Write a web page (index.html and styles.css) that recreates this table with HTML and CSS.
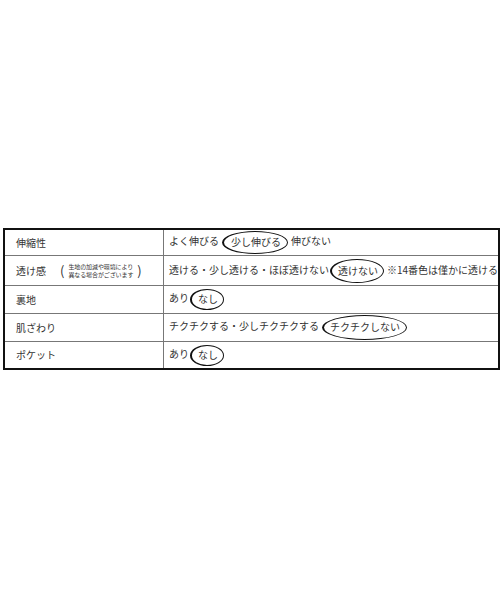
FILE: index.html
```html
<!DOCTYPE html>
<html lang="ja">
<head>
<meta charset="utf-8">
<link rel="stylesheet" href="styles.css">
</head>
<body>
<div class="page">
  <table class="spec">
    <tr class="r1">
      <th>伸縮性</th>
      <td>よく伸びる<span class="oval o1">少し伸びる</span>伸びない</td>
    </tr>
    <tr class="r2">
      <th><span class="lbl">透け感</span><span class="paren">(</span><span class="note">生地の加減や環境により<br>異なる場合がございます</span><span class="paren">)</span></th>
      <td>透ける・少し透ける・ほぼ透けない<span class="oval o2">透けない</span>※14番色は僅かに透ける</td>
    </tr>
    <tr class="r3">
      <th>裏地</th>
      <td>あり<span class="oval o3">なし</span></td>
    </tr>
    <tr class="r4">
      <th>肌ざわり</th>
      <td>チクチクする・少しチクチクする<span class="oval o4">チクチクしない</span></td>
    </tr>
    <tr class="r5">
      <th>ポケット</th>
      <td>あり<span class="oval o3">なし</span></td>
    </tr>
  </table>
</div>
</body>
</html>
```
FILE: styles.css
```css
html, body {
  margin: 0;
  padding: 0;
  background: #fff;
}
.page {
  padding: 228px 0 0 3px;
  font-family: "Noto Sans CJK JP", "Noto Sans", sans-serif;
  color: #333;
  font-size: 10px;
}
.spec {
  border-collapse: collapse;
  width: 497px;
  border: 2px solid #111;
  table-layout: fixed;
}
.spec th, .spec td {
  border-top: 1px solid #777;
  border-bottom: 1px solid #777;
  padding: 0 0 0 11px;
  text-align: left;
  font-weight: normal;
  white-space: nowrap;
  vertical-align: middle;
  line-height: 12px;
}
.spec th {
  width: 147px;
  border-right: 1px solid #777;
}
.spec td {
  padding-left: 5px;
}
.r1 th, .r1 td { height: 25px; }
.r2 th, .r2 td { height: 29px; }
.r3 th, .r3 td { height: 27px; }
.r4 th, .r4 td { height: 27px; }
.r5 th, .r5 td { height: 26px; }
.spec tr:first-child th, .spec tr:first-child td { border-top: none; }
.spec tr:last-child th, .spec tr:last-child td { border-bottom: none; }
.lbl {
  display: inline-block;
  vertical-align: middle;
}
.paren {
  display: inline-block;
  vertical-align: middle;
  font-size: 13px;
  margin-left: 14px;
}
.paren.close {
  margin-left: 3px;
}
.note {
  display: inline-block;
  vertical-align: middle;
  font-size: 6px;
  line-height: 7.5px;
  margin-left: 4px;
  letter-spacing: -0.1px;
}
.note + .paren {
  margin-left: 4px;
}
.oval {
  display: inline-block;
  border: 1.6px solid #111;
  border-left-width: 2.4px;
  border-radius: 50%;
  vertical-align: middle;
  margin: 0 3px 0 3px;
}
.o1 { padding: 4px 6px 5px 7px; }
.o2 { padding: 5px 5px 5px 6px; margin-left: 1px; }
.o3 { padding: 3px 5px 4px 6px; margin-left: 1px; }
.o4 { padding: 5px 6px 6px 6px; margin-left: 3px; }
```
